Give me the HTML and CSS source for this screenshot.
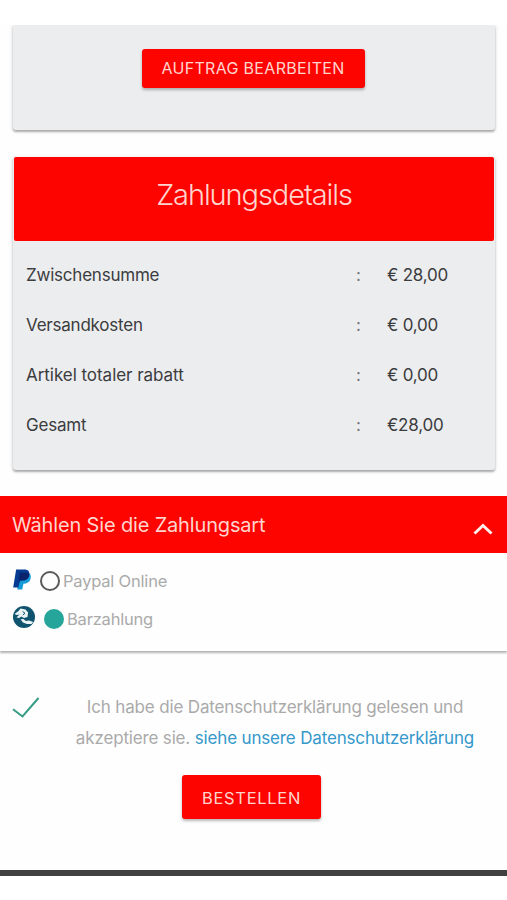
FILE: index.html
```html
<!DOCTYPE html>
<html lang="de">
<head>
<meta charset="utf-8">
<meta name="viewport" content="width=device-width, initial-scale=1">
<title>Zahlungsdetails</title>
<link rel="stylesheet" href="styles.css">
</head>
<body>
<main class="page">
  <div class="viewport">
    <section class="card order-card">
      <button class="btn btn-edit">AUFTRAG BEARBEITEN</button>
    </section>
    <section class="card details-card">
      <h2 class="details-title">Zahlungsdetails</h2>
      <div class="details">
        <div class="row"><span>Zwischensumme</span><span class="colon">:</span><span>€ 28,00</span></div>
        <div class="row"><span>Versandkosten</span><span class="colon">:</span><span>€ 0,00</span></div>
        <div class="row"><span class="discount">Artikel totaler rabatt</span><span class="colon">:</span><span>€ 0,00</span></div>
        <div class="row"><span>Gesamt</span><span class="colon">:</span><span>€28,00</span></div>
      </div>
    </section>
    <section class="methods">
      <header class="methods-head">
        <h3 class="methods-title">Wählen Sie die Zahlungsart</h3>
        <svg class="chevron" viewBox="0 0 20 12"><path d="M1.500 10.500 10 2.500l8.500 8" fill="none" stroke="#fff0ec" stroke-width="3"/></svg>
      </header>
      <div class="methods-body">
        <label class="method">
          <svg class="paypal" viewBox="0 0 20 23">
            <path d="M7 5h10.200c1.800 1.400 1.900 3.700 1.200 6-1 3.500-3.700 5-7.400 5L9.700 22H4.500z" fill="#159bd7"/>
            <path d="M3.300 1h8.500c4.300 0 6 2.200 5.300 5.800-.8 4.200-3.600 5.700-7.400 5.700H7.200L5.700 20H.2z" fill="#063b91"/>
            <path d="M7 4.500h9.200c.8.300 1.100 1.400.9 2.300-.8 4.200-3.600 5.700-7.400 5.700H7.200L6 16.500z" fill="#09236c"/>
          </svg>
          <span class="radio"></span><span class="method-name">Paypal Online</span>
        </label>
        <label class="method">
          <svg class="cash" viewBox="0 0 22 22">
            <circle cx="11" cy="11" r="11" fill="#10536f"/>
            <path d="M1.500 8 5.500 5l2-2.500 5 1 2.600 3.100-.6 4.400-3.500 1-2.800-1.400-1.800 1.400-3-.5 3.100-2.900-2.900.4z" fill="#e9f2f4"/>
            <path d="M9.600 5.500 12 7.300 9.800 9" fill="none" stroke="#10536f" stroke-width="1"/>
            <path d="m7.500 13.300 2.900-.4 2.500 2.200 3.300-.7 4 1.500-1.700 2.200-4.600-.1-3.900-1.400z" fill="#e9f2f4"/>
          </svg>
          <span class="radio checked"></span><span class="method-name">Barzahlung</span>
        </label>
      </div>
    </section>
    <section class="terms">
      <svg class="check" viewBox="0 0 28 22"><path d="M1 12.300 10.500 19.500 26.500 1" fill="none" stroke="#369c84" stroke-width="2"/></svg>
      <p class="terms-text">Ich habe die Datenschutzerklärung gelesen und<br>akzeptiere sie. <a class="link">siehe unsere Datenschutzerklärung</a></p>
    </section>
    <button class="btn btn-order">BESTELLEN</button>
  </div>
</main>
</body>
</html>
```
FILE: styles.css
```css
* { box-sizing: border-box; }
body { margin: 0; background: #fff; font-family: Inter, "Liberation Sans", sans-serif; font-size: 17px; color: #3b3c3e; }
.page { height: 900px; padding-top: 25px; overflow: hidden; }
.viewport { height: 851px; background: #fefefe; border-bottom: 6px solid #414141; display: flex; flex-direction: column; }
.card { margin: 0 12px 0 13px; background: #ecedef; border-radius: 0 0 3px 3px; box-shadow: 0 2px 2px rgba(0,0,0,.26), 0 1px 4px rgba(0,0,0,.15); }
.order-card { height: 105px; padding-top: 24px; text-align: center; clip-path: inset(0 -6px -6px -6px); }
.btn { display: block; border: 0; padding: 0; margin: 0 auto; font: inherit; line-height: 1; color: #ffd5ce; background: #fe0400; border-radius: 3px; box-shadow: 0 2px 3px rgba(0,0,0,.28); }
.btn-edit { position: relative; left: -1px; width: 223px; height: 39px; padding-bottom: 1px; font-size: 16px; letter-spacing: .32px; }
.details-card { height: 313px; margin-top: 27px; }
.details-title { margin: 0 1px; height: 84px; line-height: 76px; text-align: center; font-size: 29px; font-weight: 300; letter-spacing: -1.08px; color: #ffd5ce; background: #fe0400; border-radius: 2px; }
.details { padding: 9px 13px 0; letter-spacing: -.22px; }
.discount { letter-spacing: -.04px; }
.row { display: grid; grid-template-columns: 330px 31px 1fr; height: 50px; line-height: 50px; }
.colon { color: #77787a; }
.methods { margin-top: 26px; height: 155px; box-shadow: 0 2px 2px rgba(0,0,0,.3); background: #fefefe; }
.methods-head { height: 57px; padding: 0 14px 0 12px; display: flex; align-items: center; justify-content: space-between; background: #fe0400; }
.methods-title { margin: 0; font-size: 20px; font-weight: 400; letter-spacing: -.16px; color: #ffd5ce; }
.chevron { width: 20px; height: 12px; margin-top: 8px; }
.methods-body { padding: 9px 13px 0; color: #aaa; font-size: 16.5px; letter-spacing: -.2px; }
.method { display: flex; align-items: center; height: 38px; }
.paypal { width: 19px; height: 23px; margin: -4px 8px 0 0; }
.cash { width: 22px; height: 22px; margin: -4px 9px 0 0; }
.radio { width: 20px; height: 20px; border: 2px solid #5a5a5a; border-radius: 50%; margin-right: 3px; }
.checked { background: #26a69a; border-color: #26a69a; }
.terms { margin-top: 41px; height: 62px; padding-left: 12px; display: flex; color: #aaa; }
.check { width: 28px; height: 22px; margin-top: 5px; }
.terms-text { margin: 0 0 0 3px; width: 464px; line-height: 31px; text-align: center; white-space: nowrap; letter-spacing: -.16px; }
.link { color: #3498cb; }
.btn-order { width: 139px; height: 44px; margin: 21px 0 0 182px; padding-top: 2px; font-size: 16.5px; letter-spacing: .7px; }
```
